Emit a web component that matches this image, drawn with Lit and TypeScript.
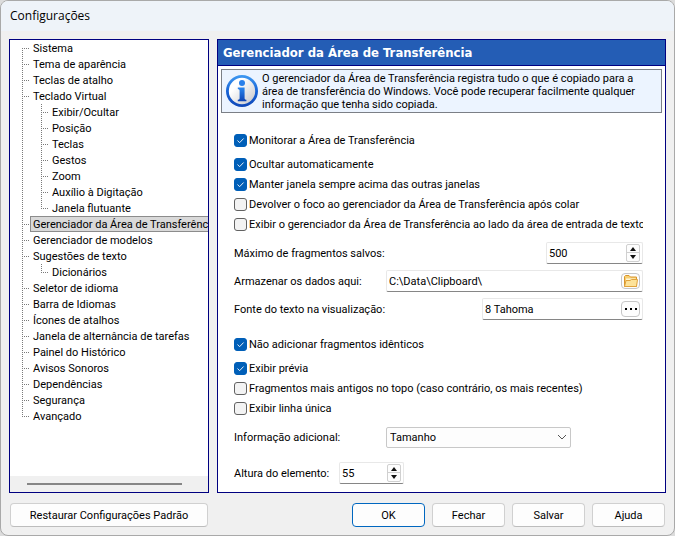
import { LitElement, html, css, svg, nothing } from "lit";
import { customElement, property } from "lit/decorators.js";
import { classMap } from "lit/directives/class-map.js";

interface TreeNode {
  label: string;
  selected?: boolean;
  children?: TreeNode[];
}

const TREE: TreeNode[] = [
  { label: "Sistema" },
  { label: "Tema de aparência" },
  { label: "Teclas de atalho" },
  {
    label: "Teclado Virtual",
    children: [
      { label: "Exibir/Ocultar" },
      { label: "Posição" },
      { label: "Teclas" },
      { label: "Gestos" },
      { label: "Zoom" },
      { label: "Auxílio à Digitação" },
      { label: "Janela flutuante" },
    ],
  },
  { label: "Gerenciador da Área de Transferência", selected: true },
  { label: "Gerenciador de modelos" },
  { label: "Sugestões de texto", children: [{ label: "Dicionários" }] },
  { label: "Seletor de idioma" },
  { label: "Barra de Idiomas" },
  { label: "Ícones de atalhos" },
  { label: "Janela de alternância de tarefas" },
  { label: "Painel do Histórico" },
  { label: "Avisos Sonoros" },
  { label: "Dependências" },
  { label: "Segurança" },
  { label: "Avançado" },
];

@customElement("settings-tree")
export class SettingsTree extends LitElement {
  static styles = css`
    :host {
      display: flex;
      flex-direction: column;
      overflow: hidden;
      background: #fff;
    }
    .scroll {
      flex: 1;
      overflow: hidden;
    }
    ul {
      list-style: none;
      margin: 0;
      padding: 0;
    }
    .item {
      background: repeating-linear-gradient(#7a7a7a 0 1px, transparent 1px 2px) 12px 0 / 1px 100% no-repeat;
    }
    .root > .item:first-child {
      background-position: 12px 8px;
    }
    .item:last-child {
      background-size: 1px 9px;
    }
    .row {
      display: flex;
      height: 16px;
      padding-left: 20px;
      background: repeating-linear-gradient(90deg, #7a7a7a 0 1px, transparent 1px 2px) 12px 8px / 8px 1px no-repeat;
    }
    .name {
      box-sizing: border-box;
      padding: 0 3px;
      line-height: 17px;
      white-space: nowrap;
    }
    .selected .name {
      flex: none;
      padding: 0 2px;
      line-height: 15px;
      border: 1px solid #8c8c8c;
      background: #d9d9d9;
    }
    .group {
      padding-left: 19px;
    }
    .bar {
      display: flex;
      align-items: center;
      height: 16px;
      padding: 0 26px 0 17px;
      background: #f0f0f0;
    }
    .thumb {
      flex: 1;
      height: 2px;
      background: #868686;
    }
  `;

  private renderNode(node: TreeNode): unknown {
    return html`<li class="item" role="treeitem" aria-selected=${node.selected ? "true" : "false"}>
      <div class=${classMap({ row: true, selected: !!node.selected })}><span class="name">${node.label}</span></div>
      ${node.children
        ? html`<ul class="group" role="group">${node.children.map((c) => this.renderNode(c))}</ul>`
        : nothing}
    </li>`;
  }

  render() {
    return html`
      <div class="scroll"><ul class="root" role="tree">${TREE.map((n) => this.renderNode(n))}</ul></div>
      <div class="bar"><div class="thumb"></div></div>
    `;
  }
}

@customElement("check-option")
export class CheckOption extends LitElement {
  @property() label = "";
  @property({ type: Boolean }) checked = false;

  static styles = css`
    :host {
      display: block;
      overflow: hidden;
    }
    label {
      display: flex;
      align-items: center;
      gap: 2px;
      height: 20px;
      white-space: nowrap;
    }
    .box {
      display: grid;
      flex: none;
      width: 13px;
      height: 13px;
    }
    input,
    svg {
      grid-area: 1 / 1;
    }
    input {
      appearance: none;
      box-sizing: border-box;
      width: 13px;
      height: 13px;
      margin: 0;
      border: 1px solid #626262;
      border-radius: 3px;
      background: #f3f3f3;
    }
    input:checked {
      border-color: #005fb8;
      background: #005fb8;
    }
    svg {
      display: none;
      pointer-events: none;
    }
    input:checked + svg {
      display: block;
    }
  `;

  render() {
    return html`<label>
      <span class="box">
        <input type="checkbox" .checked=${this.checked} />
        <svg width="13" height="13" viewBox="0 0 13 13" fill="none" stroke="#e4eef8">
          <path d="M3.5 6.5 L5.6 8.7 L9.6 4.5" />
        </svg>
      </span>
      <span>${this.label}</span>
    </label>`;
  }
}

const infoIcon = svg`
  <defs>
    <linearGradient id="ring" x1="0" y1="0" x2="0" y2="1">
      <stop offset="0" stop-color="#3f9af2" />
      <stop offset="0.5" stop-color="#1763d6" />
      <stop offset="1" stop-color="#1148b8" />
    </linearGradient>
    <linearGradient id="disc" x1="0" y1="0" x2="1" y2="1">
      <stop offset="0.3" stop-color="#ffffff" />
      <stop offset="1" stop-color="#c4c4c8" />
    </linearGradient>
    <linearGradient id="letter" x1="0" y1="0" x2="0" y2="1">
      <stop offset="0" stop-color="#2a86ee" />
      <stop offset="1" stop-color="#0d43b4" />
    </linearGradient>
  </defs>
  <circle cx="16" cy="16" r="16" fill="url(#ring)" />
  <circle cx="16" cy="16" r="13.2" fill="url(#disc)" />
  <circle cx="16" cy="8" r="3" fill="#2a80ea" />
  <path d="M11.8 12.6 H18.6 V23.4 Q18.6 24.6 20.4 24.8 V26.2 H11.8 V24.8 Q13.6 24.6 13.6 23.4 V15.4 Q13.6 14.1 11.8 14 Z" fill="url(#letter)" />
`;

const folderIcon = svg`
  <path d="M1.5 12.5 V2.5 L2.5 1.5 H6 L7.5 3 H13.5 V12.5 Z" fill="#f7cf72" stroke="#d9962c" />
  <path d="M3 4.5 H12.5 V7 H3 Z" fill="#fff6d8" />
  <path d="M1.5 12.5 L3 6.5 H7 L8.5 5.5 H14.5 L13.5 12.5 Z" fill="#fde39a" stroke="#e0a23c" />
`;

@customElement("app-root")
export class AppRoot extends LitElement {
  static styles = css`
    :host {
      display: block;
      min-height: 100vh;
      background: #dcdcdc;
      color: #000;
      font: 11px/13px Roboto, "DejaVu Sans Condensed", sans-serif;
    }
    * {
      box-sizing: border-box;
    }
    button,
    input,
    select {
      font: inherit;
      color: inherit;
      margin: 0;
    }
    .window {
      display: flex;
      flex-direction: column;
      min-height: 100vh;
      overflow: hidden;
      border: 1px solid #a9a9a9;
      border-radius: 8px;
      background: #f0f0f0;
    }
    .title {
      margin: 0;
      height: 30px;
      padding-left: 9px;
      background: #eef3f9;
      font: 12px/30px "Open Sans", "Noto Sans", sans-serif;
    }
    .main {
      flex: 1;
      display: grid;
      grid-template-columns: 200px minmax(0, 1fr);
      gap: 8px;
      padding: 8px 8px 0;
    }
    .pane {
      border: 1px solid #000080;
      background: #fff;
    }
    .heading {
      margin: 0;
      height: 26px;
      padding-left: 5px;
      border-bottom: 1px solid #000080;
      background: #245db5;
      color: #fff;
      font: bold 13px/25px "DejaVu Sans Condensed", "DejaVu Sans", sans-serif;
      white-space: nowrap;
    }
    .info {
      display: flex;
      gap: 4px;
      margin: 3px 3px 17px;
      padding: 4px;
      height: 44px;
      border: 1px solid #7b7f86;
      background: #ecf4ff;
    }
    .info svg {
      flex: none;
      margin-top: 1px;
    }
    .info p {
      margin: -2px 0 0;
      white-space: nowrap;
    }
    .form {
      padding: 0 22px 5px 16px;
    }
    .lead {
      margin-bottom: 4px;
    }
    .fields {
      margin: 5px 0 11px;
    }
    .line {
      display: flex;
      align-items: center;
      justify-content: space-between;
      height: 28px;
    }
    .start {
      justify-content: flex-start;
    }
    .extra {
      display: grid;
      gap: 8px;
      margin-top: 5px;
    }
    .wide {
      width: 152px;
    }
    .narrow {
      width: 105px;
    }
    .field {
      display: flex;
      align-items: center;
      height: 22px;
      padding-right: 2px;
      border: 1px solid #e8e8e8;
      border-bottom-color: #868686;
      border-radius: 2px;
      background: #fff;
    }
    .field input {
      flex: 1;
      min-width: 0;
      height: 18px;
      padding: 0 2px;
      border: 0;
      outline: 0;
      background: transparent;
      appearance: textfield;
    }
    .field input::-webkit-inner-spin-button {
      display: none;
    }
    .w-count {
      width: 97px;
    }
    .w-path {
      width: 257px;
    }
    .w-font {
      width: 161px;
    }
    .w-height {
      width: 65px;
    }
    .spin {
      display: grid;
      width: 14px;
      height: 18px;
      border: 1px solid #d0d0d0;
      border-radius: 2px;
      background: #fdfdfd;
    }
    .spin button {
      display: grid;
      place-items: center;
      height: 8px;
      padding: 0;
      border: 0;
      background: transparent;
    }
    .spin button:first-child {
      border-bottom: 1px solid #d0d0d0;
    }
    .tool {
      display: grid;
      place-items: center;
      width: 19px;
      height: 16px;
      padding: 0;
      border: 1px solid #c6c6c6;
      border-radius: 4px;
      background: #fdfdfd;
    }
    .combo {
      display: grid;
      align-items: center;
      width: 185px;
    }
    .combo select,
    .combo svg {
      grid-area: 1 / 1;
    }
    .combo select {
      appearance: none;
      height: 21px;
      padding: 0 20px 0 3px;
      border: 1px solid #c8c8c8;
      border-radius: 2px;
      background: #fdfdfd;
    }
    .combo svg {
      justify-self: end;
      margin-right: 4px;
      pointer-events: none;
    }
    .actions {
      display: flex;
      gap: 7px;
      padding: 10px 9px 8px;
    }
    .push {
      width: 73px;
      height: 24px;
      padding: 0;
      border: 1px solid #d0d0d0;
      border-bottom-color: #bdbdbd;
      border-radius: 4px;
      background: #fdfdfd;
    }
    .restore {
      width: 198px;
      margin-right: auto;
    }
    .primary {
      border-color: #0067c0;
    }
  `;

  private spinner(name: string) {
    return html`<span class="spin">
      <button aria-label=${"Aumentar " + name}>
        <svg width="6" height="4" viewBox="0 0 6 4"><path d="M3 0 L6 4 H0 Z" fill="#111" /></svg>
      </button>
      <button aria-label=${"Diminuir " + name}>
        <svg width="6" height="4" viewBox="0 0 6 4"><path d="M0 0 H6 L3 4 Z" fill="#111" /></svg>
      </button>
    </span>`;
  }

  render() {
    return html`<div class="window">
      <h1 class="title">Configurações</h1>
      <div class="main">
        <settings-tree class="pane"></settings-tree>
        <section class="pane">
          <h2 class="heading">Gerenciador da Área de Transferência</h2>
          <div class="info">
            <svg width="32" height="32" viewBox="0 0 32 32">${infoIcon}</svg>
            <p>
              O gerenciador da Área de Transferência registra tudo o que é copiado para a<br />
              área de transferência do Windows. Você pode recuperar facilmente qualquer<br />
              informação que tenha sido copiada.
            </p>
          </div>
          <div class="form">
            <check-option class="lead" checked label="Monitorar a Área de Transferência"></check-option>
            <check-option checked label="Ocultar automaticamente"></check-option>
            <check-option checked label="Manter janela sempre acima das outras janelas"></check-option>
            <check-option label="Devolver o foco ao gerenciador da Área de Transferência após colar"></check-option>
            <check-option label="Exibir o gerenciador da Área de Transferência ao lado da área de entrada de texto"></check-option>
            <div class="fields">
              <div class="line">
                <label for="max">Máximo de fragmentos salvos:</label>
                <span class="field w-count">
                  <input id="max" type="number" value="500" />${this.spinner("máximo")}
                </span>
              </div>
              <div class="line">
                <label for="path">Armazenar os dados aqui:</label>
                <span class="field w-path">
                  <input id="path" type="text" value="C:\\Data\\Clipboard\\" />
                  <button class="tool" aria-label="Procurar pasta">
                    <svg width="16" height="14" viewBox="0 0 16 14">${folderIcon}</svg>
                  </button>
                </span>
              </div>
              <div class="line">
                <label for="font">Fonte do texto na visualização:</label>
                <span class="field w-font">
                  <input id="font" type="text" value="8 Tahoma" />
                  <button class="tool" aria-label="Escolher fonte">
                    <svg width="12" height="2" viewBox="0 0 12 2">
                      <path d="M0 0h2v2h-2z M5 0h2v2h-2z M10 0h2v2h-2z" fill="#000" />
                    </svg>
                  </button>
                </span>
              </div>
            </div>
            <check-option class="lead" checked label="Não adicionar fragmentos idênticos"></check-option>
            <check-option checked label="Exibir prévia"></check-option>
            <check-option label="Fragmentos mais antigos no topo (caso contrário, os mais recentes)"></check-option>
            <check-option label="Exibir linha única"></check-option>
            <div class="extra">
              <div class="line start">
                <label class="wide" for="extra">Informação adicional:</label>
                <span class="combo">
                  <select id="extra"><option>Tamanho</option></select>
                  <svg width="10" height="6" viewBox="0 0 10 6" fill="none" stroke="#555">
                    <path d="M1 1 L5 5 L9 1" />
                  </svg>
                </span>
              </div>
              <div class="line start">
                <label class="narrow" for="height">Altura do elemento:</label>
                <span class="field w-height">
                  <input id="height" type="number" value="55" />${this.spinner("altura")}
                </span>
              </div>
            </div>
          </div>
        </section>
      </div>
      <div class="actions">
        <button class="push restore">Restaurar Configurações Padrão</button>
        <button class="push primary">OK</button>
        <button class="push">Fechar</button>
        <button class="push">Salvar</button>
        <button class="push">Ajuda</button>
      </div>
    </div>`;
  }
}
